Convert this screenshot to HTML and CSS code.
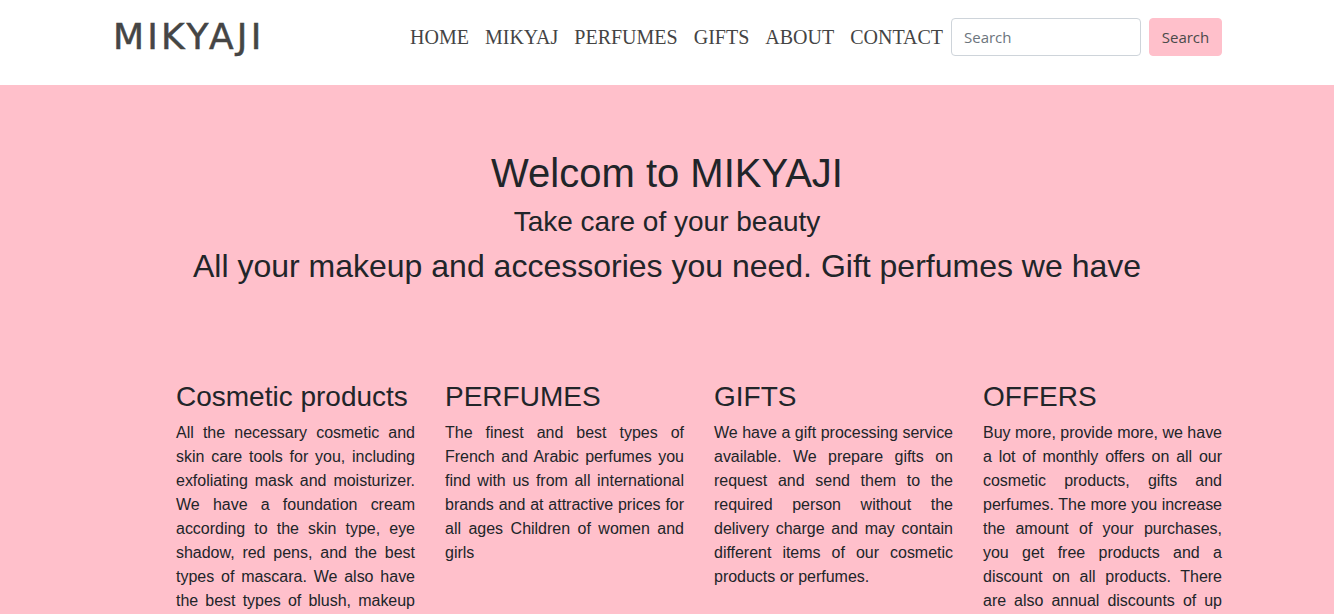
FILE: index.html
```html
<!DOCTYPE html>
<html lang="en">
<head>
<meta charset="utf-8">
<title>MIKYAJI</title>
<link rel="stylesheet" href="styles.css">
</head>
<body>
<header class="site-header">
  <div class="container header-inner">
    <a class="brand" href="#">MIKYAJI</a>
    <nav class="main-nav">
      <a class="nav-link" href="#">HOME</a>
      <a class="nav-link" href="#">MIKYAJ</a>
      <a class="nav-link" href="#">PERFUMES</a>
      <a class="nav-link" href="#">GIFTS</a>
      <a class="nav-link" href="#">ABOUT</a>
      <a class="nav-link" href="#">CONTACT</a>
    </nav>
    <form class="search-form">
      <input class="search-input" type="search" placeholder="Search">
      <button class="search-btn" type="button">Search</button>
    </form>
  </div>
</header>
<main class="hero">
  <div class="container">
    <section class="intro">
      <h1 class="intro-title">Welcom to MIKYAJI</h1>
      <h3 class="intro-sub">Take care of your beauty</h3>
      <h2 class="intro-lead">All your makeup and accessories you need. Gift perfumes we have</h2>
    </section>
    <section class="features">
      <article class="feature">
        <h3 class="feature-title">Cosmetic products</h3>
        <p class="feature-text">All the necessary cosmetic and skin care tools for you, including exfoliating mask and moisturizer. We have a foundation cream according to the skin type, eye shadow, red pens, and the best types of mascara. We also have the best types of blush, makeup brushes and all the tools you need.</p>
      </article>
      <article class="feature">
        <h3 class="feature-title">PERFUMES</h3>
        <p class="feature-text">The finest and best types of French and Arabic perfumes you find with us from all international brands and at attractive prices for all ages Children of women and girls</p>
      </article>
      <article class="feature">
        <h3 class="feature-title">GIFTS</h3>
        <p class="feature-text">We have a gift processing service available. We prepare gifts on request and send them to the required person without the delivery charge and may contain different items of our cosmetic products or perfumes.</p>
      </article>
      <article class="feature">
        <h3 class="feature-title">OFFERS</h3>
        <p class="feature-text">Buy more, provide more, we have a lot of monthly offers on all our cosmetic products, gifts and perfumes. The more you increase the amount of your purchases, you get free products and a discount on all products. There are also annual discounts of up to&nbsp;half the price.</p>
      </article>
    </section>
  </div>
</main>
</body>
</html>
```
FILE: styles.css
```css
* { box-sizing: border-box; }
html, body { margin: 0; padding: 0; }
body {
  font-family: "Liberation Sans", Arial, sans-serif;
  font-size: 16px;
  line-height: 1.5;
  color: #212529;
  background: #ffc0cb;
}
.container {
  width: 1140px;
  margin: 0 auto;
  padding: 0 15px;
}
.site-header {
  background: #ffffff;
  padding-bottom: 11px;
}
.header-inner {
  height: 74px;
  display: flex;
  align-items: center;
}
.brand {
  font-family: "DejaVu Sans", Verdana, sans-serif;
  font-size: 36px;
  letter-spacing: 3.2px;
  -webkit-text-stroke: 0.5px #454545;
  color: #454545;
  text-decoration: none;
  line-height: 1;
  margin-left: 1px;
}
.main-nav {
  margin-left: auto;
  display: flex;
  align-items: center;
}
.nav-link {
  font-family: "Liberation Serif", "Times New Roman", serif;
  font-size: 20px;
  color: #444;
  text-decoration: none;
  padding: 0 8px;
  line-height: 1.5;
}
.search-form {
  display: flex;
  align-items: center;
}
.search-input {
  width: 190px;
  height: 38px;
  border: 1px solid #ced4da;
  border-radius: 4px;
  padding: 6px 12px;
  font-family: "Open Sans", "Noto Sans", sans-serif;
  font-size: 15px;
  color: #495057;
  background: #fff;
  outline: none;
}
.search-input::placeholder { color: #6c757d; }
.search-btn {
  margin-left: 8px;
  height: 38px;
  width: 73px;
  border: 1px solid #ffc0cb;
  border-radius: 4px;
  background: #ffc0cb;
  color: #4a4a4a;
  font-family: "Open Sans", "Noto Sans", sans-serif;
  font-size: 15px;
  padding: 0;
}
.hero { padding-top: 64px; padding-bottom: 40px; }
.intro { text-align: center; }
.intro-title {
  margin: 0 0 8px;
  font-size: 40px;
  font-weight: 400;
  line-height: 1.2;
}
.intro-sub {
  margin: 0 0 8px;
  font-size: 28px;
  font-weight: 400;
  line-height: 1.2;
}
.intro-lead {
  margin: 0;
  font-size: 32px;
  font-weight: 400;
  line-height: 1.2;
}
.features {
  margin: 95px 0 0 64px;
  display: grid;
  grid-template-columns: repeat(4, 239px);
  column-gap: 30px;
}
.feature-title {
  margin: 0 0 7px;
  font-size: 28px;
  font-weight: 400;
  line-height: 1.2;
}
.feature-text {
  margin: 0;
  text-align: justify;
  line-height: 24px;
  letter-spacing: -0.02px;
}
```
